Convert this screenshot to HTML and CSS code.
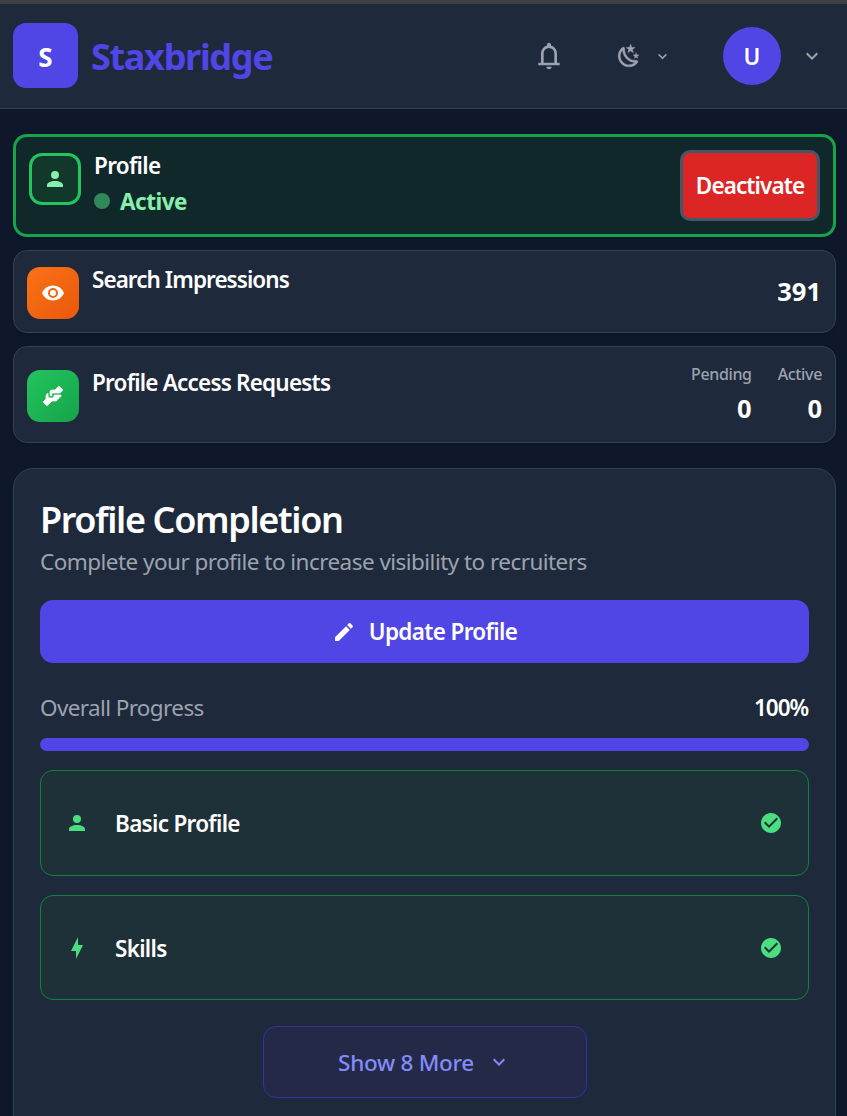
FILE: index.html
```html
<!DOCTYPE html>
<html lang="en">
<head>
<meta charset="utf-8">
<title>Staxbridge</title>
<link rel="stylesheet" href="styles.css">
</head>
<body>
<header class="topbar">
  <div class="logo">S</div>
  <div class="brand"><span>Staxbridge</span></div>
  <nav class="tools">
    <svg class="bell" viewBox="0 0 24 24"><path d="M4 19v-2h2v-7q0-2.075 1.25-3.687T10.5 4.2v-.7q0-.625.438-1.062T12 2t1.063.438T13.5 3.5v.7q2 .5 3.25 2.113T18 10v7h2v2zm8 3q-.825 0-1.412-.587T10 20h4q0 .825-.587 1.413T12 22m-4-5h8v-7q0-1.65-1.175-2.825T12 6T9.175 7.175T8 10z"/></svg>
    <svg class="moon" viewBox="0 0 24 24"><path d="m17.75 4.09l-2.53 1.94l.91 3.06l-2.63-1.81l-2.63 1.81l.91-3.06l-2.53-1.94L12.44 4l1.06-3l1.06 3zm3.5 6.91l-1.64 1.25l.59 1.98l-1.7-1.17l-1.7 1.17l.59-1.98L15.75 11l2.06-.05L18.5 9l.69 1.95zm-2.28 4.95c.83-.08 1.72 1.1 1.19 1.85c-.32.45-.66.87-1.08 1.27C15.17 23 8.84 23 4.94 19.07c-3.91-3.9-3.91-10.24 0-14.14c.4-.4.82-.76 1.27-1.08c.75-.53 1.93.36 1.85 1.19c-.27 2.86.69 5.83 2.89 8.02a9.96 9.96 0 0 0 8.02 2.89m-1.64 2.02a12.08 12.08 0 0 1-7.8-3.47c-2.17-2.19-3.33-5-3.49-7.82c-2.81 3.14-2.7 7.96.31 10.98c3.02 3.01 7.84 3.12 10.98.31"/></svg>
    <svg class="chev-small" viewBox="0 0 24 24"><path d="M7.41 8.59 12 13.17l4.59-4.58L18 10l-6 6-6-6z"/></svg>
    <div class="avatar">U</div>
    <svg class="chev" viewBox="0 0 24 24"><path d="M7.41 8.59 12 13.17l4.59-4.58L18 10l-6 6-6-6z"/></svg>
  </nav>
</header>
<main class="page">
  <section class="card status">
    <div class="tile tile-outline"><svg class="icon" viewBox="0 0 24 24"><path d="M12 4a4 4 0 0 1 4 4a4 4 0 0 1-4 4a4 4 0 0 1-4-4a4 4 0 0 1 4-4m0 10c4.42 0 8 1.79 8 4v2H4v-2c0-2.21 3.58-4 8-4"/></svg></div>
    <div class="status-text">
      <div class="label profile-label">Profile</div>
      <div class="state"><i class="dot"></i><span>Active</span></div>
    </div>
    <button class="deactivate">Deactivate</button>
  </section>
  <section class="card search">
    <div class="tile tile-orange"><svg class="icon" viewBox="0 0 24 24"><path d="M12 9a3 3 0 0 0-3 3a3 3 0 0 0 3 3a3 3 0 0 0 3-3a3 3 0 0 0-3-3m0 8a5 5 0 0 1-5-5a5 5 0 0 1 5-5a5 5 0 0 1 5 5a5 5 0 0 1-5 5m0-12.5C7 4.5 2.73 7.61 1 12c1.73 4.39 6 7.5 11 7.5s9.27-3.11 11-7.5c-1.73-4.39-6-7.5-11-7.5"/></svg></div>
    <div class="label search-label">Search Impressions</div>
    <div class="value search-value">391</div>
  </section>
  <section class="card access">
    <div class="tile tile-green"><svg class="icon handshake" viewBox="0 0 24 24"><path d="M11 6H14L17.29 2.7A1 1 0 0 1 18.71 2.7L21.29 5.29A1 1 0 0 1 21.29 6.7L19 9H11V11A1 1 0 0 1 10 12A1 1 0 0 1 9 11V8A2 2 0 0 1 11 6M5 11V15L2.71 17.29A1 1 0 0 0 2.71 18.71L5.29 21.29A1 1 0 0 0 6.71 21.29L11 17H15A1 1 0 0 0 16 16V15H17A1 1 0 0 0 18 14V13H19A1 1 0 0 0 20 12V11H13V12A2 2 0 0 1 11 14H9A2 2 0 0 1 7 12V9L5 11Z"/></svg></div>
    <div class="label access-label">Profile Access Requests</div>
    <div class="counts">
      <div class="count"><div class="caption">Pending</div><div class="value">0</div></div>
      <div class="count"><div class="caption">Active</div><div class="value">0</div></div>
    </div>
  </section>
  <section class="completion">
    <h1 class="title">Profile Completion</h1>
    <p class="subtitle">Complete your profile to increase visibility to recruiters</p>
    <button class="update"><svg class="icon" viewBox="0 0 24 24"><path d="M20.71 7.04c.39-.39.39-1.04 0-1.41l-2.34-2.34c-.37-.39-1.02-.39-1.41 0l-1.84 1.83l3.75 3.75M3 17.25V21h3.75L17.81 9.93l-3.75-3.75z"/></svg><span>Update Profile</span></button>
    <div class="progress-head"><span class="overall">Overall Progress</span><span class="percent">100%</span></div>
    <div class="bar"></div>
    <div class="step step-basic">
      <svg class="icon" viewBox="0 0 24 24"><path d="M12 4a4 4 0 0 1 4 4a4 4 0 0 1-4 4a4 4 0 0 1-4-4a4 4 0 0 1 4-4m0 10c4.42 0 8 1.79 8 4v2H4v-2c0-2.21 3.58-4 8-4"/></svg>
      <span class="step-name">Basic Profile</span>
      <svg class="icon check" viewBox="0 0 24 24"><path d="M12 2C6.5 2 2 6.5 2 12s4.500 10 10 10 10-4.500 10-10S17.500 2 12 2m-2 15l-5-5 1.410-1.410L10 14.170l7.590-7.590L19 8z"/></svg>
    </div>
    <div class="step step-skills">
      <svg class="icon" viewBox="0 0 24 24"><path d="M11 15H6l7-14v8h5l-7 14z"/></svg>
      <span class="step-name">Skills</span>
      <svg class="icon check" viewBox="0 0 24 24"><path d="M12 2C6.5 2 2 6.5 2 12s4.500 10 10 10 10-4.500 10-10S17.500 2 12 2m-2 15l-5-5 1.410-1.410L10 14.170l7.590-7.590L19 8z"/></svg>
    </div>
    <button class="more"><span>Show 8 More</span><svg class="icon" viewBox="0 0 24 24"><path d="M7.41 8.59 12 13.17l4.59-4.58L18 10l-6 6-6-6z"/></svg></button>
  </section>
</main>
</body>
</html>
```
FILE: styles.css
```css
* { box-sizing: border-box; }
html { background: #0f172a; }
body {
  margin: 0;
  height: 1116px;
  overflow: hidden;
  background: #0f172a;
  color: #fff;
  font: 400 22.5px/34px "Noto Sans", "Open Sans", sans-serif;
  white-space: nowrap;
}
button { font: inherit; color: inherit; margin: 0; padding: 0; }
svg { display: block; fill: currentColor; flex: none; }
.icon { width: 24px; height: 24px; }

.topbar {
  height: 109px;
  display: flex;
  align-items: center;
  padding: 0 23px 0 13px;
  border-top: 4px solid #40403e;
  border-bottom: 1px solid #334155;
  background: #1e293b;
}
.logo {
  width: 65px; height: 65px;
  margin-top: -1px;
  border-radius: 13px;
  background: #4f46e5;
  display: grid; place-items: center;
  font-weight: 700; font-size: 26px;
  padding-top: 2px;
}
.brand { margin-left: 13px; padding-top: 2px; color: #4f46e5; font-weight: 700; font-size: 36px; letter-spacing: -1.3px; }
.tools { margin-left: auto; display: flex; align-items: center; color: #9ca3af; }
.bell { width: 32px; height: 32px; margin-right: 51px; }
.moon { width: 26px; height: 26px; margin-right: 12px; stroke: currentColor; stroke-width: .3; }
.chev-small { width: 17px; height: 17px; margin-right: 52px; stroke: currentColor; stroke-width: .4; }
.avatar {
  width: 58px; height: 58px;
  margin-right: 19px;
  border-radius: 50%;
  background: #4f46e5; color: #fff;
  display: grid; place-items: center;
  font-weight: 600; padding-top: 2px;
}
.chev { width: 24px; height: 24px; }

.page { padding: 25px 11px 0 13px; }
.card {
  display: flex;
  border: 1px solid #334155;
  border-radius: 14px;
  background: #1e293b;
  box-shadow: 0 2px 3px rgba(0, 0, 0, .08);
}
.tile {
  width: 52px; height: 52px;
  border-radius: 13px;
  display: grid; place-items: center;
  flex: none;
}
.handshake { stroke: currentColor; stroke-width: .7; stroke-linejoin: round; }
.label { font-weight: 600; margin-left: 13px; }
.status { height: 103px; border: 3px solid #16a34a; background: #11282b; padding: 13px; }
.tile-outline { margin-top: 3px; border: 3px solid #22c55e; background: #12372b; color: #86efac; }
.status-text { margin-left: 13px; }
.profile-label { margin: -1px 0 0; letter-spacing: -.7px; }
.state { display: flex; align-items: center; margin-top: 2px; color: #86efac; font-weight: 700; letter-spacing: -.5px; }
.dot { width: 16px; height: 16px; margin-right: 10px; margin-top: -3px; border-radius: 50%; background: #308859; }
.deactivate {
  width: 140px; height: 71px;
  margin-left: auto;
  border: 3px solid #475569;
  border-radius: 10px;
  background: #dc2626;
  font-weight: 600;
  letter-spacing: -.9px;
}
.search { height: 83px; margin-top: 13px; padding: 12px 14px 0 13px; }
.search-label { letter-spacing: -.95px; }
.tile-orange { margin-top: 4px; background: linear-gradient(135deg, #f97316, #ea580c); }
.value { font-weight: 700; font-size: 25.5px; }
.search-value { margin-left: auto; margin-top: 11px; }
.access { height: 97px; margin-top: 13px; padding: 0 13px; }
.tile-green { margin-top: 23px; background: linear-gradient(135deg, #22c55e, #16a34a); }
.access-label { margin-top: 19px; letter-spacing: -.8px; }
.counts { display: flex; gap: 26px; margin-left: auto; padding-top: 10px; text-align: right; }
.caption { color: #9ca3af; font-size: 16px; font-weight: 500; letter-spacing: -.35px; }

.completion {
  height: 680px;
  margin-top: 25px;
  padding: 26px;
  border: 1px solid #334155;
  border-radius: 20px;
  background: #1e293b;
}
.title { margin: 0; font-size: 36px; line-height: 49px; font-weight: 600; letter-spacing: -1.35px; }
.subtitle { margin: 1px 0 0; height: 34px; color: #9ca3af; letter-spacing: -.54px; }
.update {
  width: 100%; height: 63px;
  margin-top: 21px;
  display: flex; align-items: center; justify-content: center; gap: 13px;
  border: 0; border-radius: 13px;
  background: #4f46e5; font-weight: 600;
  letter-spacing: -.65px;
}
.progress-head { display: flex; justify-content: space-between; margin-top: 28px; }
.overall { color: #9ca3af; letter-spacing: -.62px; }
.percent { font-weight: 600; letter-spacing: -1.1px; padding-right: 1px; }
.bar { height: 13px; margin-top: 13px; border-radius: 7px; background: #4f46e5; }
.step {
  display: flex; align-items: center;
  margin-top: 19px; padding: 0 25px 0 23.5px;
  border: 1px solid #15803d;
  border-radius: 13px;
  background: #1f3138;
  color: #4ade80;
}
.step-basic { height: 106px; }
.step-skills { height: 105px; }
.step-name { margin-left: 26.5px; padding-top: 2px; color: #fff; font-weight: 600; letter-spacing: -.7px; }
.check { margin-left: auto; }
.more {
  width: 324px; height: 72px;
  margin: 26px auto 0;
  display: flex; align-items: center; justify-content: center; gap: 13px;
  border: 1px solid #3730a3;
  border-radius: 13px;
  background: #242948;
  color: #818cf8; font-weight: 500; letter-spacing: -.28px;
}
.more span { padding-top: 2px; }
```
